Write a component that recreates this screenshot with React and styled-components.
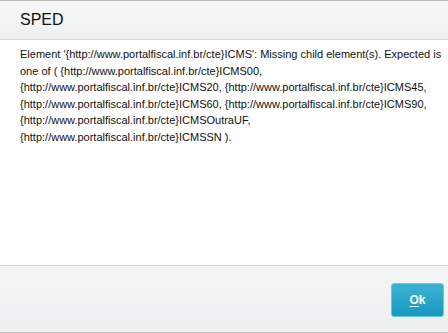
import React from 'react';
import styled, { createGlobalStyle } from 'styled-components';

const GlobalStyle = createGlobalStyle`
  html, body {
    margin: 0;
    padding: 0;
    background: #fff;
  }
  body {
    font-family: 'Liberation Sans', Arial, sans-serif;
  }
`;

const Dialog = styled.div`
  width: 448px;
  height: 333px;
  display: flex;
  flex-direction: column;
  box-sizing: border-box;
  border-top: 1px solid #bdbdbd;
  border-bottom: 1px solid #c4c4c4;
  background: #fff;
`;

const Header = styled.header`
  height: 38px;
  display: flex;
  align-items: center;
  padding-left: 20px;
  background: linear-gradient(#f6f7f7, #eef0f1);
  border-bottom: 1px solid #d6d6d6;
  font-size: 16px;
  color: #111;
`;

const Body = styled.div`
  flex: 1;
  padding: 6px 0 0 20px;
  font-size: 11px;
  line-height: 16.6px;
  color: #111;
  word-break: break-word;
`;

const Footer = styled.footer`
  height: 66px;
  display: flex;
  align-items: center;
  justify-content: flex-end;
  padding-right: 4px;
  background: linear-gradient(#f4f5f5, #eeeff0);
  border-top: 1px solid #d4d4d4;
`;

const Button = styled.button`
  width: 53px;
  height: 34px;
  margin-top: 2px;
  border: 1px solid #60c8ea;
  border-radius: 3px;
  background: linear-gradient(#3cb2d4, #1798bf);
  color: #fff;
  font-family: 'Liberation Sans', Arial, sans-serif;
  font-weight: bold;
  font-size: 12px;
  cursor: pointer;

  u {
    text-underline-offset: 2px;
  }
`;

const msg =
  "Element '{http://www.portalfiscal.inf.br/cte}ICMS': Missing child element(s). Expected is one of ( {http://www.portalfiscal.inf.br/cte}ICMS00, {http://www.portalfiscal.inf.br/cte}ICMS20, {http://www.portalfiscal.inf.br/cte}ICMS45, {http://www.portalfiscal.inf.br/cte}ICMS60, {http://www.portalfiscal.inf.br/cte}ICMS90, {http://www.portalfiscal.inf.br/cte}ICMSOutraUF, {http://www.portalfiscal.inf.br/cte}ICMSSN ).";

const App = () => {
  return (
    <>
      <GlobalStyle />
      <Dialog>
        <Header>SPED</Header>
        <Body>{msg}</Body>
        <Footer>
          <Button>
            <u>O</u>k
          </Button>
        </Footer>
      </Dialog>
    </>
  );
};

export default App;
